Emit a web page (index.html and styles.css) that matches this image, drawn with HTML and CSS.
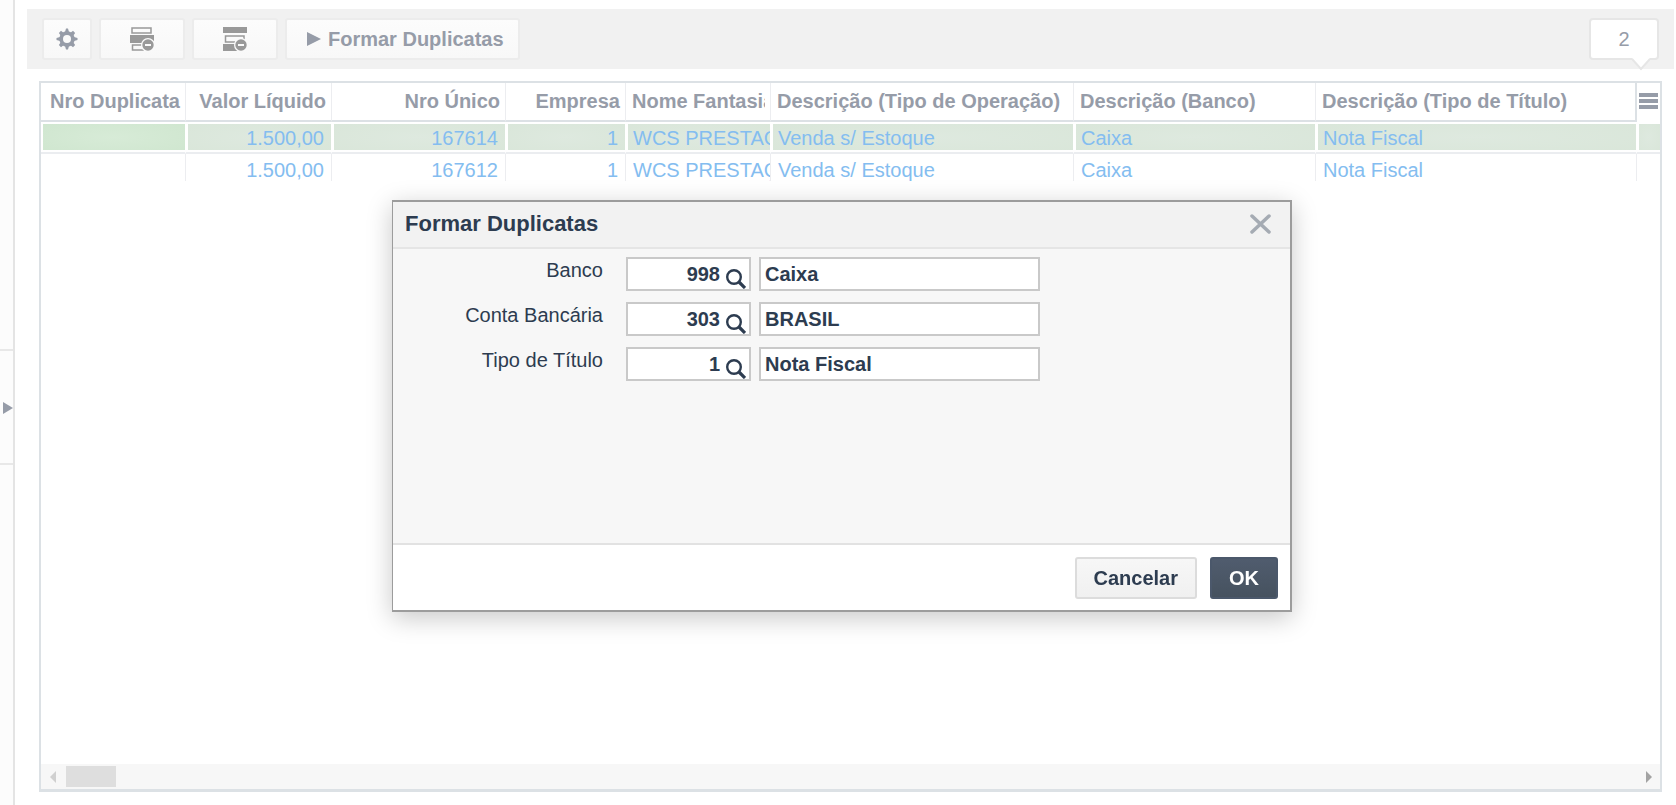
FILE: index.html
```html
<!DOCTYPE html>
<html lang="pt-BR">
<head>
<meta charset="utf-8">
<title>Formar Duplicatas</title>
<link rel="stylesheet" href="styles.css">
</head>
<body>
<div class="app">
  <aside class="side">
    <button class="side-handle" type="button" aria-label="Expandir painel">
      <svg width="10" height="12" viewBox="0 0 10 12"><path d="M0 0L10 6L0 12Z" fill="#969ca8"/></svg>
    </button>
  </aside>
  <main class="main">
    <div class="toolbar">
      <button class="tool tool-gear" type="button" aria-label="Configurações">
        <svg width="22" height="22" viewBox="0 0 22 22"><g fill="#969ca8"><path d="M9 4L10 0.500H12L13 4V18L12 21.500H10L9 18Z"/><path d="M9 4L10 0.500H12L13 4V18L12 21.500H10L9 18Z" transform="rotate(90 11 11)"/><path d="M9 4L9.500 1H12.500L13 4V18L12.500 21H9.500L9 18Z" transform="rotate(45 11 11)"/><path d="M9 4L9.500 1H12.500L13 4V18L12.500 21H9.500L9 18Z" transform="rotate(-45 11 11)"/><circle cx="11" cy="11" r="7.700"/></g><circle cx="11" cy="11" r="4" fill="#fafafa"/></svg>
      </button>
      <button class="tool tool-rows" type="button" aria-label="Remover linha atual">
        <svg width="24" height="24" viewBox="0 0 24 24"><g fill="none" stroke="#999" stroke-width="1.500"><rect x="2" y="1" width="19" height="5"/><path d="M12 18H2.500V23H14"/></g><rect y="8" width="24" height="8" fill="#999"/><circle cx="18" cy="18" r="7" fill="#fafafa"/><circle cx="18" cy="18" r="5.700" fill="#999"/><rect x="15" y="17" width="6" height="2" fill="#fafafa"/></svg>
      </button>
      <button class="tool tool-rows" type="button" aria-label="Remover outras linhas">
        <svg width="24" height="24" viewBox="0 0 24 24"><rect width="24" height="6" fill="#999"/><path d="M12 15H2.500V9H21V13" fill="none" stroke="#999" stroke-width="1.500"/><rect y="17" width="18" height="7" fill="#999"/><circle cx="18" cy="18" r="7" fill="#fafafa"/><circle cx="18" cy="18" r="5.700" fill="#999"/><rect x="15" y="17" width="6" height="2" fill="#fafafa"/></svg>
      </button>
      <button class="tool tool-main" type="button">
        <svg width="14" height="14" viewBox="0 0 14 14"><path d="M0 0L14 7L0 14Z" fill="#969ca8"/></svg>
        Formar Duplicatas
      </button>
      <div class="count">2
        <svg class="count-tail" width="18" height="13" viewBox="0 0 18 13"><path d="M0 0H18L9 11Z" fill="#fff"/><path d="M0 1L9 11L18 1" fill="none" stroke="#e6e6e6" stroke-width="2"/></svg>
      </div>
    </div>
    <section class="grid">
      <table class="table">
        <colgroup><col class="c1"><col class="c2"><col class="c3"><col class="c4"><col class="c5"><col class="c6"><col class="c7"><col class="c8"><col class="c9"></colgroup>
        <thead>
          <tr>
            <th class="num">Nro Duplicata</th><th class="num">Valor Líquido</th><th class="num">Nro Único</th><th class="num">Empresa</th>
            <th><div class="clip">Nome Fantasia</div></th><th>Descrição (Tipo de Operação)</th><th>Descrição (Banco)</th><th class="last">Descrição (Tipo de Título)</th>
            <th class="menu-cell"><button class="menu" type="button" aria-label="Colunas"><svg width="19" height="16" viewBox="0 0 19 16"><path d="M0 0H19V4H0ZM0 6H19V10H0ZM0 12H19V16H0Z" fill="#969ca8"/></svg></button></th>
          </tr>
        </thead>
        <tbody>
          <tr class="selected">
            <td class="current"></td><td class="num">1.500,00</td><td class="num">167614</td><td class="num">1</td><td class="flush"><div class="clip">WCS PRESTAÇ</div></td><td>Venda s/ Estoque</td><td>Caixa</td><td>Nota Fiscal</td><td></td>
          </tr>
          <tr>
            <td></td><td class="num">1.500,00</td><td class="num">167612</td><td class="num">1</td><td class="flush"><div class="clip">WCS PRESTAÇ</div></td><td>Venda s/ Estoque</td><td>Caixa</td><td>Nota Fiscal</td><td></td>
          </tr>
        </tbody>
      </table>
      <div class="scrollbar">
        <svg width="6" height="12" viewBox="0 0 6 12"><path d="M6 0V12L0 6Z" fill="#d0d0d0"/></svg>
        <div class="thumb"></div>
        <svg class="to-end" width="6" height="12" viewBox="0 0 6 12"><path d="M0 0V12L6 6Z" fill="#a3a3a3"/></svg>
      </div>
    </section>
  </main>
</div>
<div class="overlay">
  <form class="dialog" role="dialog" aria-labelledby="dialog-title">
    <header class="dialog-head">
      <h1 class="dialog-title" id="dialog-title">Formar Duplicatas</h1>
      <button class="close" type="button" aria-label="Fechar"><svg width="21" height="20" viewBox="0 0 21 20"><path d="M2 2L19 18M19 2L2 18" stroke="#a5abb3" stroke-width="3.500" stroke-linecap="round"/></svg></button>
    </header>
    <div class="dialog-body">
      <div class="field">
        <label class="label" for="banco">Banco</label>
        <div class="lookup"><input class="code" id="banco" value="998"><button class="search" type="button" aria-label="Pesquisar banco"><svg width="20" height="20" viewBox="0 0 20 20"><circle cx="8" cy="8" r="6.800" fill="none" stroke="#2d3c50" stroke-width="2.400"/><path d="M13 13L19 19" stroke="#2d3c50" stroke-width="3.200"/></svg></button></div>
        <input class="desc" aria-label="Nome do banco" value="Caixa">
      </div>
      <div class="field">
        <label class="label" for="conta">Conta Bancária</label>
        <div class="lookup"><input class="code" id="conta" value="303"><button class="search" type="button" aria-label="Pesquisar conta"><svg width="20" height="20" viewBox="0 0 20 20"><circle cx="8" cy="8" r="6.800" fill="none" stroke="#2d3c50" stroke-width="2.400"/><path d="M13 13L19 19" stroke="#2d3c50" stroke-width="3.200"/></svg></button></div>
        <input class="desc" aria-label="Nome da conta" value="BRASIL">
      </div>
      <div class="field">
        <label class="label" for="tipo">Tipo de Título</label>
        <div class="lookup"><input class="code" id="tipo" value="1"><button class="search" type="button" aria-label="Pesquisar tipo"><svg width="20" height="20" viewBox="0 0 20 20"><circle cx="8" cy="8" r="6.800" fill="none" stroke="#2d3c50" stroke-width="2.400"/><path d="M13 13L19 19" stroke="#2d3c50" stroke-width="3.200"/></svg></button></div>
        <input class="desc" aria-label="Nome do tipo" value="Nota Fiscal">
      </div>
    </div>
    <footer class="dialog-foot">
      <button class="btn" type="button">Cancelar</button>
      <button class="btn btn-ok" type="submit">OK</button>
    </footer>
  </form>
</div>
</body>
</html>
```
FILE: styles.css
```css
* { box-sizing: border-box; }
body { margin: 0; background: #fff; color: #2d3c50; font: 20px/24px "Liberation Sans", Arial, sans-serif; }
button, input { font: inherit; color: inherit; margin: 0; padding: 0; }
button { border: 0; background: none; display: flex; align-items: center; justify-content: center; }
svg { display: block; flex: none; }

.app { display: flex; height: 100vh; }
.side { flex: none; width: 15px; display: flex; align-items: center; background: #fcfcfc; border-right: 2px solid #e4e4e4; }
.side-handle { width: 13px; height: 116px; padding: 2px 0 0 3px; margin-top: 8px; border: solid #e8e8e8; border-width: 2px 0; }
.main { flex: 1; min-width: 0; display: flex; flex-direction: column; gap: 12px; padding: 9px 2px 13px 12px; }

.toolbar { display: flex; align-items: center; gap: 7px; height: 60px; padding: 0 15px; background: #f1f1f1; }
.tool { height: 42px; border: 2px solid #ececec; border-radius: 3px; background: linear-gradient(#fcfcfc, #f8f8f8); color: #969ca8; font-weight: bold; }
.tool-gear { width: 50px; }
.tool-rows { width: 86px; }
.tool-main { gap: 7px; padding: 0 14px 0 20px; }
.count { position: relative; display: flex; align-items: center; justify-content: center; width: 70px; height: 42px; margin-left: auto; border: 2px solid #e6e6e6; border-radius: 4px; background: #fff; color: #969ca8; }
.count-tail { position: absolute; right: 7px; bottom: -13px; }

.grid { flex: 1; min-height: 0; display: flex; flex-direction: column; justify-content: space-between; margin: 0 12px; border: 2px solid #dce1e5; border-bottom-width: 3px; }
.table { width: 100%; table-layout: fixed; border-collapse: separate; border-spacing: 0; color: #84bdf0; }
.c1, .c5 { width: 145px; }
.c2 { width: 146px; }
.c3 { width: 174px; }
.c4 { width: 120px; }
.c6 { width: 303px; }
.c7 { width: 242px; }
.c8 { width: 321px; }
th, td { overflow: hidden; white-space: nowrap; text-align: left; border-right: 1px solid #ecedf0; }
th { height: 39px; padding: 0 5px 2px 6px; color: #969ca8; font-weight: bold; border-bottom: 2px solid #dce1e5; }
td { height: 27px; padding: 4px 7px 0; line-height: 22px; }
.num { text-align: right; }
.clip { overflow: hidden; }
.flush { padding-right: 0; }
.last { border-right: 2px solid #dce1e5; }
.menu-cell { padding: 0 2px 2px; border-right: 0; border-bottom-color: #fff; }
.selected td { height: 32px; padding-top: 2px; border-right-color: #fff; border-bottom: 2px solid #ebedf0; background: radial-gradient(ellipse, #dee9df, #d9e6d9); box-shadow: inset 0 2px #fff, inset 0 -2px #fff, inset 2px 0 #fff; }
.selected .current { background: radial-gradient(ellipse, #d7ebd7, #cfe6cf); }
th:last-child, td:last-child { border-right: 0; }

.scrollbar { display: flex; align-items: center; gap: 10px; height: 25px; padding: 0 8px 0 9px; background: #f7f7f7; }
.thumb { width: 50px; height: 21px; background: #dedede; }
.to-end { margin-left: auto; }

.overlay { position: fixed; inset: 0; display: flex; align-items: center; justify-content: center; padding: 6px 0 0 8px; }
.dialog { width: 900px; border: 2px solid #9c9c9c; border-left-width: 1px; background: #fff; box-shadow: 0 6px 24px rgba(0, 0, 0, .22); }
.dialog-head { display: flex; align-items: center; justify-content: space-between; height: 47px; padding: 0 19px 0 12px; background: #f2f2f2; border-bottom: 2px solid #e5e5e5; }
.dialog-title { margin: 0; font-size: 22px; }
.dialog-body { display: flex; flex-direction: column; gap: 11px; min-height: 296px; padding: 8px 0; background: #f7f7f7; border-bottom: 2px solid #e2e2e2; }
.field { display: flex; align-items: flex-start; gap: 8px; }
.label { width: 210px; margin-right: 15px; padding-top: 1px; text-align: right; }
.lookup { display: flex; width: 125px; height: 34px; border: 2px solid #c9c9c9; background: #fff; }
.code { flex: 1; min-width: 0; border: 0; background: none; text-align: right; font-weight: bold; outline: 0; }
.search { width: 29px; padding: 10px 3px 0 0; align-items: flex-start; justify-content: flex-end; }
.desc { width: 281px; height: 34px; padding: 2px 4px 0; border: 2px solid #c9c9c9; border-radius: 0; background: #fff; font-weight: bold; }
.dialog-foot { display: flex; align-items: center; justify-content: flex-end; gap: 13px; height: 65px; padding: 2px 12px 0; }
.btn { height: 42px; padding: 0 17px; border: 2px solid #dcdcdc; border-radius: 3px; background: linear-gradient(#f7f7f7, #f0f0f0); font-weight: bold; }
.btn-ok { border-color: #4b586b; background: linear-gradient(#505c6e, #46525f); color: #fff; }
```
